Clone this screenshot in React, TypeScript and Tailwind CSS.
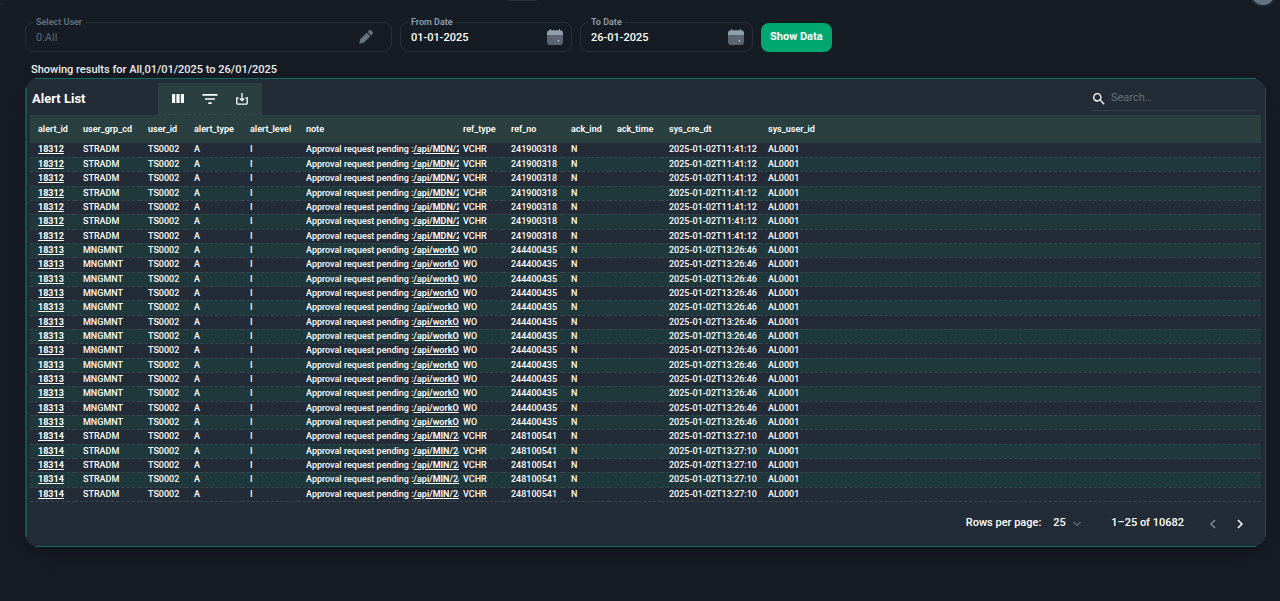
import clsx from 'clsx';
import { useState } from 'react';
import type { ReactNode } from 'react';
import {
    MdFilterList,
    MdKeyboardArrowLeft,
    MdKeyboardArrowRight,
    MdSearch,
} from 'react-icons/md';

type AlertGroup = {
    count: number;
    alertId: string;
    groupCode: string;
    link: string;
    refType: string;
    refNo: string;
    createdAt: string;
};

const columns = [
    { name: 'alert_id', width: 'w-[45px]' },
    { name: 'user_grp_cd', width: 'w-[65px]' },
    { name: 'user_id', width: 'w-[46px]' },
    { name: 'alert_type', width: 'w-[56px]' },
    { name: 'alert_level', width: 'w-[56px]' },
    { name: 'note', width: 'w-[157px]' },
    { name: 'ref_type', width: 'w-[48px]' },
    { name: 'ref_no', width: 'w-[60px]' },
    { name: 'ack_ind', width: 'w-[46px]' },
    { name: 'ack_time', width: 'w-[52px]' },
    { name: 'sys_cre_dt', width: 'w-[99px]' },
    { name: 'sys_user_id', width: 'w-auto' },
];

const groups: AlertGroup[] = [
    {
        count: 7,
        alertId: '18312',
        groupCode: 'STRADM',
        link: '/api/MDN/2',
        refType: 'VCHR',
        refNo: '241900318',
        createdAt: '2025-01-02T11:41:12',
    },
    {
        count: 13,
        alertId: '18313',
        groupCode: 'MNGMNT',
        link: '/api/workOr',
        refType: 'WO',
        refNo: '244400435',
        createdAt: '2025-01-02T13:26:46',
    },
    {
        count: 5,
        alertId: '18314',
        groupCode: 'STRADM',
        link: '/api/MIN/24',
        refType: 'VCHR',
        refNo: '248100541',
        createdAt: '2025-01-02T13:27:10',
    },
];

const rows = groups.flatMap((group) =>
    Array.from({ length: group.count }, () => group),
);

type FieldProps = {
    id: string;
    label: string;
    value: string;
    width: string;
    disabled?: boolean;
    icon: ReactNode;
};

function Field({ id, label, value, width, disabled, icon }: FieldProps) {
    const [text, setText] = useState(value);

    return (
        <div className={clsx('relative', width)}>
            <div className="flex h-[30px] items-center rounded-lg border border-[#28303a] pr-2 pl-[10px]">
                <input
                    id={id}
                    value={text}
                    disabled={disabled}
                    onChange={(event) => setText(event.target.value)}
                    className={clsx(
                        'w-full min-w-0 bg-transparent pt-0.5 text-[11px] outline-none',
                        disabled
                            ? 'text-[#5b6773]'
                            : 'font-medium text-white',
                    )}
                />
                {icon}
            </div>
            <label
                htmlFor={id}
                className={clsx(
                    'absolute -top-1.5 left-2 bg-[#161c24] px-[3px] text-[9px] leading-3 font-semibold',
                    disabled ? 'text-[#637381]' : 'text-[#919eab]',
                )}
            >
                {label}
            </label>
        </div>
    );
}

function PencilIcon() {
    return (
        <svg viewBox="0 0 14 14" className="mr-[10px] size-[14px] shrink-0 text-[#637381]">
            <path
                fill="currentColor"
                d="M1.2 9.2 7.700 2.700 11.300 6.300 4.800 12.800 .9 13.600a.5.5 0 0 1-.6-.6ZM8.500 1.900 9.700.7a1.900 1.900 0 0 1 2.700 0l.9.9a1.900 1.900 0 0 1 0 2.700l-1.200 1.200Z"
            />
        </svg>
    );
}

function CalendarIcon() {
    return (
        <svg viewBox="0 0 16 16" className="size-4 shrink-0">
            <path
                fill="#919eab"
                d="M3 0h1v1.200h8V0h1v1.200a3 3 0 0 1 3 3V6H0V4.200a3 3 0 0 1 3-3Z"
            />
            <path fill="#596371" d="M0 6h16v7a3 3 0 0 1-3 3H3a3 3 0 0 1-3-3Z" />
            <circle cx="11.500" cy="11.700" r="1" fill="#a4b0bb" />
        </svg>
    );
}

function ColumnsIcon() {
    return (
        <svg viewBox="0 0 12 9" className="h-[9px] w-3" fill="currentColor">
            <path d="M0 0h3.200v9H0ZM4.400 0h3.200v9H4.400ZM8.800 0H12v9H8.800Z" />
        </svg>
    );
}

function DownloadIcon() {
    return (
        <svg
            viewBox="0 0 12 12"
            className="size-3"
            fill="none"
            stroke="currentColor"
            strokeWidth="1.300"
        >
            <path d="M2.500 5H.8v5.200q0 1 1 1h8.400q1 0 1-1V5H9.500M6 0v7.500M3.800 5.500 6 7.700l2.200-2.200" />
        </svg>
    );
}

function ToolButton({ label, children }: { label: string; children: ReactNode }) {
    return (
        <button
            type="button"
            aria-label={label}
            className="flex size-6 items-center justify-center"
        >
            {children}
        </button>
    );
}

function AlertTable() {
    return (
        <table className="w-full table-fixed border-collapse text-left text-[9px] leading-[13px] font-medium whitespace-nowrap">
            <thead className="bg-[#293f40]">
                <tr className="h-7">
                    {columns.map((column) => (
                        <th
                            key={column.name}
                            className={clsx('p-0 pl-2 font-semibold', column.width)}
                        >
                            {column.name}
                        </th>
                    ))}
                </tr>
            </thead>
            <tbody>
                {rows.map((row, index) => (
                    <tr
                        key={index}
                        className="h-[14px] border-b border-dashed border-[#394750] odd:bg-[#222b36] even:bg-[#1f383c] nth-[3n]:h-[15px]"
                    >
                        <td className="p-0 pl-2">
                            <a href="#" className="font-bold underline">
                                {row.alertId}
                            </a>
                        </td>
                        <td className="p-0 pl-2">{row.groupCode}</td>
                        <td className="p-0 pl-2">TS0002</td>
                        <td className="p-0 pl-2">A</td>
                        <td className="p-0 pl-2">I</td>
                        <td className="p-0 pl-2">
                            <div className="-mr-1 overflow-hidden">
                                Approval request pending :
                                <a href="#" className="font-semibold underline">
                                    {row.link}
                                </a>
                            </div>
                        </td>
                        <td className="p-0 pl-2">{row.refType}</td>
                        <td className="p-0 pl-2">{row.refNo}</td>
                        <td className="p-0 pl-2">N</td>
                        <td />
                        <td className="p-0 pl-2">{row.createdAt}</td>
                        <td className="p-0 pl-2">AL0001</td>
                    </tr>
                ))}
            </tbody>
        </table>
    );
}

function Pagination() {
    return (
        <div className="flex h-11 items-center justify-end pr-[17px] text-[11px] font-medium">
            <label htmlFor="page-size">Rows per page:</label>
            <div className="relative ml-3">
                <select
                    id="page-size"
                    defaultValue="25"
                    className="w-7 appearance-none bg-transparent outline-none"
                >
                    <option value="25">25</option>
                    <option value="50">50</option>
                    <option value="100">100</option>
                </select>
                <svg
                    viewBox="0 0 8 5"
                    className="pointer-events-none absolute top-1/2 right-0 h-[5px] w-2 -translate-y-1/2"
                    fill="none"
                    stroke="#919eab"
                >
                    <path d="m.5.500 3.500 3.500L7.500.500" />
                </svg>
            </div>
            <span className="ml-[30px]">1–25 of 10682</span>
            <button
                type="button"
                aria-label="Previous page"
                disabled
                className="ml-5 text-[#7d8995]"
            >
                <MdKeyboardArrowLeft className="size-[18px]" />
            </button>
            <button type="button" aria-label="Next page" className="ml-[9px]">
                <MdKeyboardArrowRight className="size-[18px]" />
            </button>
        </div>
    );
}

export default function App() {
    return (
        <div className="relative min-h-screen overflow-hidden bg-[#161c24] font-['Roboto',sans-serif] text-white">
            <div className="absolute -top-3 -left-4 size-5 rounded-full border border-dashed border-[#28333d]" />
            <div className="absolute -top-1 left-[507px] h-[5px] w-[31px] rounded-sm bg-[#28303a]" />
            <div className="absolute -top-[21px] right-[3px] size-7 rounded-full border-2 border-[#202831] bg-[#637381]" />

            <main className="pt-[22px] pr-[14px] pl-[25px]">
                <form
                    className="flex gap-2"
                    onSubmit={(event) => event.preventDefault()}
                >
                    <Field
                        id="user"
                        label="Select User"
                        value="0:All"
                        width="w-[367px]"
                        disabled
                        icon={<PencilIcon />}
                    />
                    <Field
                        id="from"
                        label="From Date"
                        value="01-01-2025"
                        width="w-[172px]"
                        icon={<CalendarIcon />}
                    />
                    <Field
                        id="to"
                        label="To Date"
                        value="26-01-2025"
                        width="w-[173px]"
                        icon={<CalendarIcon />}
                    />
                    <button
                        type="submit"
                        className="mt-px h-[29px] rounded-lg bg-[#00a76f] px-[9px] text-[11px] font-bold"
                    >
                        Show Data
                    </button>
                </form>

                <p className="mt-[9px] pl-[6px] text-[11px] leading-[17px] font-medium">
                    Showing results for All,01/01/2025 to 26/01/2025
                </p>

                <section className="relative rounded-[14px] bg-[#222b36] py-px shadow-[0_8px_24px_#14151f]">
                    {/* Edge lines stop short of the rounded corners */}
                    <div className="pointer-events-none absolute inset-x-[10px] inset-y-0 border-y border-[#0b6b5c]" />
                    <div className="pointer-events-none absolute inset-x-0 inset-y-[10px] border-r border-l-2 border-[#14564f]" />

                    <header className="flex h-9 items-center pt-1 pr-[10px] pl-[7px]">
                        <h1 className="w-[126px] text-[13px] font-bold">
                            Alert List
                        </h1>
                        <div className="flex h-8 items-center gap-2 border-b border-dashed border-[#3a4a50] bg-[#293f40] px-2">
                            <ToolButton label="Columns">
                                <ColumnsIcon />
                            </ToolButton>
                            <ToolButton label="Filters">
                                <MdFilterList className="size-5" />
                            </ToolButton>
                            <ToolButton label="Export">
                                <DownloadIcon />
                            </ToolButton>
                        </div>
                        <label className="ml-auto flex h-6 w-[165px] items-center gap-1 border-b border-[#34404a]">
                            <MdSearch className="size-4 shrink-0" />
                            <input
                                type="search"
                                aria-label="Search"
                                placeholder="Search…"
                                className="w-full min-w-0 bg-transparent text-[11px] outline-none placeholder:text-[#637381]"
                            />
                        </label>
                    </header>
                    <div className="px-[5px]">
                        <AlertTable />
                    </div>
                    <Pagination />
                </section>
            </main>
        </div>
    );
}
